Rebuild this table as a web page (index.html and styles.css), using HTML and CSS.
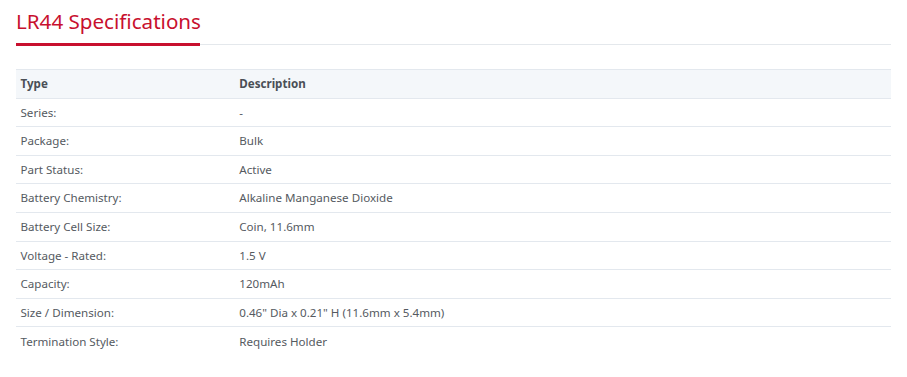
FILE: index.html
```html
<!DOCTYPE html>
<html>
<head>
<meta charset="utf-8">
<link rel="stylesheet" href="styles.css">
</head>
<body>
<div class="page">
  <div class="title-wrap">
    <h2 class="title">LR44 Specifications</h2>
  </div>
  <table class="specs">
    <thead>
      <tr><th class="col-type">Type</th><th>Description</th></tr>
    </thead>
    <tbody>
      <tr><td>Series:</td><td>-</td></tr>
      <tr><td>Package:</td><td>Bulk</td></tr>
      <tr><td>Part Status:</td><td>Active</td></tr>
      <tr><td>Battery Chemistry:</td><td>Alkaline Manganese Dioxide</td></tr>
      <tr><td>Battery Cell Size:</td><td>Coin, 11.6mm</td></tr>
      <tr><td>Voltage - Rated:</td><td>1.5 V</td></tr>
      <tr><td>Capacity:</td><td>120mAh</td></tr>
      <tr><td>Size / Dimension:</td><td>0.46" Dia x 0.21" H (11.6mm x 5.4mm)</td></tr>
      <tr><td>Termination Style:</td><td>Requires Holder</td></tr>
    </tbody>
  </table>
</div>
</body>
</html>
```
FILE: styles.css
```css
* { box-sizing: border-box; }
body {
  margin: 0;
  background: #fff;
  font-family: "Noto Sans", "Open Sans", sans-serif;
  color: #555a61;
}
.page {
  padding: 0 16px;
}
.title-wrap {
  border-bottom: 1px solid #e4e8ec;
  height: 45px;
}
.title {
  display: inline-block;
  margin: 0;
  padding-top: 7px;
  height: 46px;
  font-size: 20.6px;
  font-weight: 400;
  line-height: 28px;
  color: #c8102e;
  border-bottom: 3px solid #c8102e;
  width: 184px;
  white-space: nowrap;
}
.specs {
  width: 100%;
  margin-top: 24px;
  border-collapse: collapse;
  font-size: 11.6px;
}
.specs th, .specs td {
  text-align: left;
  padding: 5px 5px 5px 4.5px;
  line-height: 17.6px;
  height: 28.6px;
  border-top: 1px solid #e3e8ee;
}
.specs th {
  background: #f4f7fa;
  font-weight: 700;
  color: #4a4f56;
  height: 28px;
}
.specs thead tr { border-bottom: 1px solid #e3e8ee; }
.col-type { width: 25%; }
```
